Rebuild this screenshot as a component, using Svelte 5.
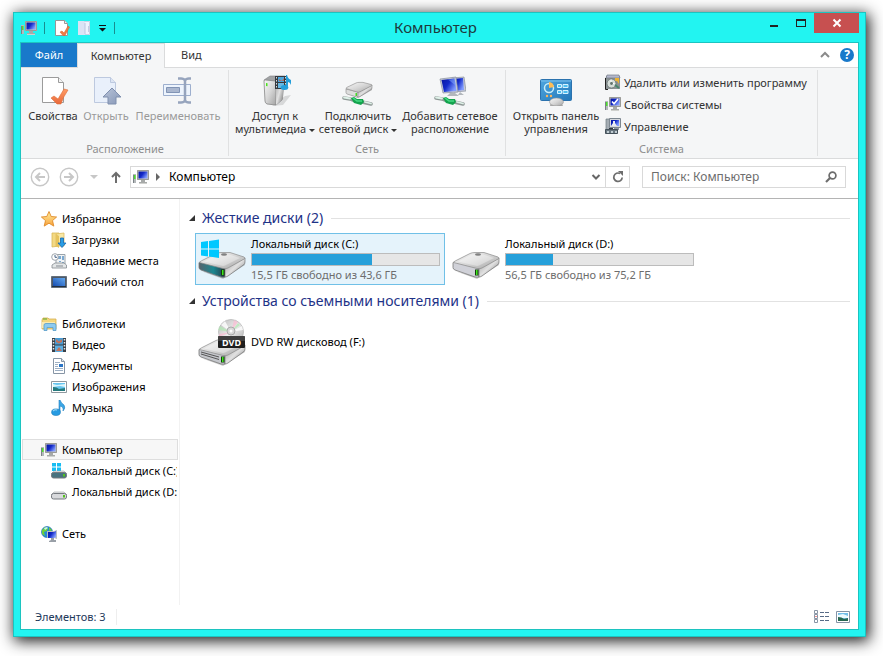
<script>
    let search = $state('');
    let selected = $state('C');
    let openDisks = $state(true);
    let openRemovable = $state(true);

    const tree = [
        [
            { label: 'Избранное', icon: 'star' },
            { label: 'Загрузки', icon: 'downloads', child: true },
            { label: 'Недавние места', icon: 'recent', child: true },
            { label: 'Рабочий стол', icon: 'desktop', child: true }
        ],
        [
            { label: 'Библиотеки', icon: 'libraries' },
            { label: 'Видео', icon: 'video', child: true },
            { label: 'Документы', icon: 'document', child: true },
            { label: 'Изображения', icon: 'pictures', child: true },
            { label: 'Музыка', icon: 'music', child: true }
        ],
        [
            { label: 'Компьютер', icon: 'computer', current: true },
            { label: 'Локальный диск (C:)', icon: 'diskC', child: true },
            { label: 'Локальный диск (D:)', icon: 'disk', child: true }
        ],
        [{ label: 'Сеть', icon: 'network' }]
    ];

    const drives = [
        { id: 'C', label: 'Локальный диск (C:)', free: 15.5, total: 43.6, icon: 'driveC' },
        { id: 'D', label: 'Локальный диск (D:)', free: 56.5, total: 75.2, icon: 'drive' }
    ];

    const gb = (n) => n.toFixed(1).replace('.', ',');
    const used = (d) => Math.round(((d.total - d.free) / d.total) * 100);
</script>

{#snippet pc()}
    <path d="M0 5h3v9H0z" fill="#b5b9bb" />
    <path d="M0 6h1v8H0z" fill="#7b8287" />
    <path d="M1 6h1.500v4H1z" fill="#4de02c" />
    <path d="M4 1h12v10H4z" fill="#c9c8bd" />
    <path d="M4.500 1.500h11v9h-11z" fill="none" stroke="#9a9b98" />
    <path d="M5.500 2.500h9v7h-9z" fill="url(#screen)" />
    <path d="M8 11h4v2h2v1H6v-1h2z" fill="#a7aaa9" />
    <path d="M6 14h8v1H6z" fill="#d0d1ce" />
{/snippet}

{#snippet smallDisk(fill)}
    <path d="M3 8h10l3 3H0z" fill="#e6e7e8" stroke="#a0a3a6" stroke-width=".6" />
    <rect x="0.500" y="9.500" width="15" height="5.500" rx="2" {fill} stroke="#777b80" />
    <path d="M12 11h2v2.500h-2z" fill="#54c21e" />
{/snippet}

{#snippet bigDrive(front)}
    <path d="M3 36l22 8 22-14v-4L26 42z" fill="#000" opacity=".2" />
    <path d="M1 28q0-1 1.500-1L27 33v9q-2 .5-4 0L3 35q-2-.8-2-2.500z" fill={front} stroke="#777" stroke-width=".8" />
    <path d="M27 33l20-10v4q0 1.500-1 2.500L30 41q-1.500 1-3 1z" fill="url(#side)" stroke="#666" stroke-width=".6" />
    <path d="M1.500 27.500q.5-1 2-1.700L18 18.500q2-1 5-1h9l14 4.500q1.500.8.500 1.800L30 33q-2 1-5 .5z" fill="url(#metal)" stroke="#8a8a8a" stroke-width=".7" />
    <path d="M6 26.500L20 19.500h11l11 3.500-15 7.500q-1.500.7-3 .3z" fill="#fff" opacity=".35" />
    <ellipse cx="26" cy="19.500" rx="3" ry="1.200" fill="#555" opacity=".7" />
    <path d="M23 34.500h3.500v6H23z" fill="#153b10" />
    <path d="M24 35h1.500v5H24z" fill="#3ee61c" />
{/snippet}

{#snippet cable()}
    <path d="M2 24l6 1 5 2M20 28l9 2" fill="none" stroke="#8f9997" stroke-width="3.500" stroke-linecap="round" />
    <path d="M2 23.500l6 1M23 28l6 1.500" fill="none" stroke="#dff1e8" stroke-width="1.800" stroke-linecap="round" />
    <path d="M9 24l3-1 3 2 6 0 1 3-3 3-7-2z" fill="#13a34d" />
    <path d="M11 24l4 3h5" fill="none" stroke="#45d983" stroke-width="1.500" />
{/snippet}

{#snippet flag()}
    <path d="M3 7l7-1v7.500H3zM11 6l10-1.500v9H11zM3 14.500h7v7l-7-1zM11 14.500h10v8.500l-10-1.400z" fill="#00c8ff" />
{/snippet}

{#snippet icon(name, size = 16)}
    {#if size === 16}
        <svg class="i16" viewBox="0 0 16 16" aria-hidden="true">
            {#if name === 'computer'}
                {@render pc()}
            {:else if name === 'star'}
                <path d="M8 .5l2.200 5 5.400.500-4.100 3.600 1.300 5.500L8 12.200l-4.800 2.900 1.300-5.500L.4 6l5.400-.5z" fill="url(#gold)" stroke="#e08a28" stroke-width=".9" />
            {:else if name === 'downloads'}
                <path d="M1 1h7v13l-7 1z" fill="#f3d983" stroke="#d9b757" stroke-width=".8" />
                <path d="M5 2l8-1v13H5z" fill="#f8e7a4" stroke="#ddbd60" stroke-width=".8" />
                <path d="M5 2l3 2v12l-3-2z" fill="#e6c35d" />
                <path d="M9.500 6h3v5H15l-4 4.500L7 11h2.500z" fill="#289de5" stroke="#1667b0" stroke-width=".8" />
            {:else if name === 'recent'}
                <path d="M5 1.500h9v10H5z" fill="#f0f3f5" stroke="#9aa3aa" />
                <path d="M7 3h3v3H7zM11 3h2v4h-2zM8 8h2v1H8zM11 9h2v1h-2z" fill="#7ba8cf" />
                <path d="M1 12l3-2h9l2.500 2v3H1z" fill="#e3e6e7" stroke="#858b90" stroke-width=".8" />
                <path d="M5 12.500h7v1H5z" fill="#858b90" />
                <circle cx="4" cy="4" r="3.300" fill="#fff" stroke="#a0a6ac" />
                <path d="M4 2v2.300h2" fill="none" stroke="#4b6585" />
            {:else if name === 'desktop'}
                <path d="M.5 2.500h15v11H.5z" fill="#4e5967" stroke="#65707c" />
                <path d="M2 4h12v8H2z" fill="url(#desk)" />
                <path d="M1 12h14v1H1z" fill="#24303f" />
            {:else if name === 'libraries'}
                <path d="M1 4l1-2h5l1 1h7v10H1z" fill="#f4d77d" stroke="#d7ae50" stroke-width=".8" />
                <path d="M2 3h4" stroke="#58a830" />
                <path d="M1 6h13v6H1z" fill="#faeab2" />
                <path d="M3 14.500V9q0-1.500 2-1.500h8q2 0 2 1.500v5.500h-3v-3H6v3z" fill="#8ccaf0" stroke="#589cc8" stroke-width=".8" />
            {:else if name === 'video'}
                <path d="M1 1h14v14H1z" fill="#3a4048" />
                <path d="M4 1h8v6.500H4z" fill="#479cd5" />
                <path d="M4 8.500h8V15H4z" fill="#5daee1" />
                <path d="M5 2l3 2.500L11 2v3l-3 1.500L5 5zM5 14l3-4 3 4z" fill="#c5735a" />
                <path d="M2.500 2v12M13.500 2v12" stroke="#e3e8ea" stroke-width="1.500" stroke-dasharray="1.500 1.500" />
            {:else if name === 'document'}
                <path d="M2.500.5h8l3 3v12h-11z" fill="#fff" stroke="#8795a5" />
                <path d="M10.500.5v3h3" fill="#dce3ea" stroke="#8795a5" />
                <path d="M4 4.500h5M4 6.500h3M4 8.500h3M4 10.500h8M4 12.500h8" stroke="#9dafc3" />
                <path d="M8 6h4v3H8z" fill="#2b75c6" />
            {:else if name === 'pictures'}
                <path d="M.5 2.500h15v11H.5z" fill="#fff" stroke="#8f999f" />
                <path d="M2 4h12v8H2z" fill="#66c5ef" />
                <path d="M2 5l4 1 8-1v3l-5-1-7 1z" fill="#dcf5fb" />
                <path d="M2 8q4 0 6 2l6-1v3H2z" fill="#257a7d" />
            {:else if name === 'music'}
                <path d="M8 0h1q1 3 4 5 2 3-1 6 1-4-3-5v6H8z" fill="#3ba6e5" stroke="#2282c2" stroke-width=".6" />
                <ellipse cx="5" cy="12.200" rx="4.400" ry="3.300" fill="#279be2" stroke="#1f7dbb" stroke-width=".6" />
                <path d="M2 11q2-2 4-1" fill="none" stroke="#a9dffa" />
            {:else if name === 'diskC'}
                <path d="M1 0h4v3.500H1zM6 0h4v3.500H6zM1 4.500h4V8H1zM6 4.500h4V8H6z" fill="#16bdf3" />
                {@render smallDisk('#48727f')}
            {:else if name === 'disk'}
                {@render smallDisk('#d8d9dc')}
            {:else if name === 'network'}
                <circle cx="6" cy="6" r="5.500" fill="#2688d7" stroke="#1b66a9" stroke-width=".6" />
                <path d="M1 4l3-3 3 1-1 3-3 1 1 4-3-2zM8 1l3 3-2 2-1-2z" fill="#6bcf3d" />
                <path d="M3 2l3-1 1 1-3 2z" fill="#c6f0f5" />
                <path d="M6 5h7l3-1v9l-3-1H6z" fill="#b8bdc3" />
                <path d="M7 6h6l2-1v6l-2 1H7z" fill="url(#screen)" />
                <path d="M10 12h3v2h2v2H8v-1l2-1z" fill="#999fa7" />
            {:else if name === 'check'}
                <path d="M1.500.5h9l3 3v12h-12z" fill="#fff" stroke="#979797" />
                <path d="M10.500.5v3h3" fill="#eee" stroke="#979797" />
                <path d="M6 12l2-1 2 2 4-7 1.500 1-4.500 8.500H9z" fill="#f07a43" stroke="#d8602b" stroke-width=".5" />
            {:else if name === 'folder'}
                <path d="M2 1h12v14H2z" fill="#edf3ff" />
                <path d="M2.500 1.500h11v13h-11z" fill="none" stroke="#c9d0e4" />
                <path d="M2 1h6l1 2v12H2z" fill="#dbe3f5" />
                <path d="M9 3v11" stroke="#bbc6e0" />
                <path d="M12.500 6v6" stroke="#c3cce3" />
            {:else if name === 'programs'}
                <path d="M1 2h14v13H1z" fill="#8b9294" />
                <path d="M2 1h12l1 3H1z" fill="#b3b7cc" stroke="#737b85" stroke-width=".7" />
                <path d="M10 4h4v6l-2-3h-2z" fill="#edb332" />
                <circle cx="6.500" cy="9.500" r="4.500" fill="#d5ddd9" stroke="#687372" stroke-width=".8" />
                <circle cx="6.500" cy="9.500" r="1.400" fill="#60736d" />
                <path d="M6 5.500v2.500M9.500 9.500h-1.500" stroke="#fff" />
                <path d="M10 11l4 3" stroke="#48856c" stroke-width="2" />
                <path d="M.5 4v11.500H3" fill="none" stroke="#222" />
            {:else if name === 'sysprops'}
                {@render pc()}
                <path d="M7 5.500l2 2.300L13 3" fill="none" stroke="#fff" stroke-width="1.600" />
            {:else if name === 'manage'}
                <path d="M1 1h5v11H1z" fill="#a4acb3" stroke="#6e7880" stroke-width=".7" />
                <path d="M4.500.5h11v9h-11z" fill="#d7dade" stroke="#7d8790" />
                <path d="M6 2h8v6H6z" fill="url(#screen)" />
                <path d="M6 8l2-3V3h2v2l2 3z" fill="#e9edf1" />
                <path d="M9 10h5v2H9z" fill="#8d969d" />
                <path d="M.5 11.500h12v4H.5z" fill="#697780" stroke="#45515a" />
                <path d="M2 13h2v2H2zM6 13h2v2H6zM10 13h2v2h-2z" fill="#c0ccd2" />
                <path d="M4 10h4v1H4z" fill="#333b44" />
            {/if}
        </svg>
    {:else if size === 32}
        <svg class="i32" viewBox="0 0 32 32" aria-hidden="true">
            {#if name === 'properties'}
                <path d="M5.500 3.500h16l5 5v20h-21z" fill="#fff" stroke="#9b9b9b" />
                <path d="M21.500 3.500v5h5" fill="#f3f3f3" stroke="#9b9b9b" />
                <path d="M14 24l3-2 4 3 6-10 4 1q-5 7-7 14h-4z" fill="url(#orange)" stroke="#de6e3a" stroke-width=".6" />
            {:else if name === 'open'}
                <path d="M4.500 3.500h16l5 5v20h-21z" fill="#e9f0fb" stroke="#bdc9df" />
                <path d="M20.500 3.500v5h5" fill="#dde5f3" stroke="#bdc9df" />
                <path d="M22 14l9 9h-5v7h-8v-7h-5z" fill="url(#arrow)" stroke="#7f8fae" />
            {:else if name === 'rename'}
                <path d="M1.500 10.500h27v11h-27z" fill="#edf4fd" stroke="#9dafce" />
                <path d="M4.500 13.500h13v5h-13z" fill="#aab7cf" stroke="#8194b5" />
                <path d="M16 4.500h3q3 0 4 2 1-2 4-2h2M16 28.500h3q3 0 4-2 1 2 4 2h2M23 6v21" fill="none" stroke="#96a4bd" stroke-width="2.500" />
            {:else if name === 'media'}
                <path d="M13 32l11-1 8-10-6 1z" fill="#000" opacity=".12" />
                <path d="M5 6l6-4h15l-3 24-6 5z" fill="#a1a3a5" stroke="#808284" stroke-width=".6" />
                <path d="M5 7q0-1 1.500-1L17 7v24l-9-1q-2-1-2-3z" fill="url(#metal)" stroke="#878787" stroke-width=".8" />
                <path d="M17 7l8-5-1 23-7 6z" fill="url(#side)" />
                <path d="M7 9l1.500.2v3L7 12z" fill="#4ce31e" />
                <path d="M16 2h12v13H16z" fill="#353a40" />
                <path d="M19 3h6v5h-6z" fill="#4ba5dc" />
                <path d="M19 9h6v5h-6z" fill="#69b8e2" />
                <path d="M20 5l3 2 2-3v3h-5z" fill="#c06751" />
                <path d="M17.500 3v11M26.500 3v11" stroke="#d9dcdd" stroke-dasharray="1.500 1.500" />
                <path d="M27 1h1q1 4 4 5v5q-1-3-3-3v6h-2z" fill="#249fdb" />
                <ellipse cx="25.500" cy="13.500" rx="3.800" ry="2.500" fill="#249fdb" />
            {:else if name === 'mapdrive'}
                <path d="M5 19l11 5 14-8v-2L16 22z" fill="#555" opacity=".4" />
                <path d="M4 15l12 3v5q-2 0-3-.5L5 20q-1-.5-1-1.500z" fill="#ddd" stroke="#888" stroke-width=".6" />
                <path d="M16 18l14-7v3q0 1-1 1.500L18 22.500q-1 .5-2 .5z" fill="url(#side)" stroke="#777" stroke-width=".5" />
                <path d="M4 14.500q0-.7 1-1.200L14 9q1-.6 3-.6h4l8.500 2.200q1 .5 0 1.200L18 17.800q-1.500.7-3 .2z" fill="url(#metal)" stroke="#888" stroke-width=".6" />
                <path d="M13.500 19H15v3h-1.500z" fill="#47db25" />
                {@render cable()}
            {:else if name === 'addnet'}
                <path d="M18 4l12-1 2 14-12 1z" fill="#c7cbd5" stroke="#888f9d" stroke-width=".7" />
                <path d="M19 5l10-1 1 12-9 1z" fill="url(#screen)" />
                <path d="M6 5l16-2 2 15-15 1z" fill="#c7cbd5" stroke="#888f9d" stroke-width=".7" />
                <path d="M7.500 6l13-1.500 2 12.500-12.500 1z" fill="url(#screen)" />
                <path d="M14 5.500l7-.8 1 7z" fill="#8aafff" opacity=".5" />
                <path d="M16 19h5l4 3H13zM26 18l4 3h-6z" fill="#b2b7bc" />
                {@render cable()}
            {:else if name === 'control'}
                <rect x=".5" y="5.500" width="31" height="21" rx="1" fill="url(#panel)" stroke="#2b72ae" />
                <path d="M1 6h30v2H1z" fill="#75bdeb" opacity=".6" />
                <circle cx="9" cy="14" r="4.500" fill="none" stroke="#c7edfa" stroke-width="1.500" />
                <path d="M9 14V8a6 6 0 0 1 5 5z" fill="#ffbc55" />
                <path d="M17.500 10.500h4v3h-4zM23 10.500h5v3h-5zM17.500 16.500h4v3h-4zM23 16.500h5v3h-5z" fill="#4ebff0" stroke="#d4f2ff" />
                <circle cx="7" cy="22" r="1.200" fill="#ffb65c" />
                <circle cx="11" cy="22" r="1.200" fill="#ffb65c" />
                <path d="M10 32q0-4 6-4t7 4z" fill="#aaa" />
                <ellipse cx="16.500" cy="28" rx="7" ry="4" fill="url(#metal)" stroke="#999" stroke-width=".6" />
            {/if}
        </svg>
    {:else}
        <svg class="i48" viewBox="0 0 48 48" aria-hidden="true">
            {#if name === 'driveC'}
                {@render bigDrive('url(#teal)')}
                {@render flag()}
            {:else if name === 'drive'}
                {@render bigDrive('#d0d1d8')}
            {:else if name === 'dvd'}
                <g transform="translate(0 4)">
                    {@render bigDrive('#c5c7cc')}
                    <path d="M3 30l18 5M3 32l18 5.500" stroke="#555" />
                </g>
                <circle cx="33" cy="14" r="12.500" fill="url(#disc)" stroke="#b2b2b2" stroke-width=".7" />
                <path d="M33 14L23 7l4-4zM33 14l11-6 1 4z" fill="#fff" opacity=".8" />
                <path d="M33 14l3-12 4 2zM33 14l-12 2v3z" fill="#ffb5d0" opacity=".6" />
                <path d="M33 14l7-9 2 2zM33 14L22 8l-2 4z" fill="#afe8b1" opacity=".7" />
                <circle cx="33" cy="13" r="4" fill="#d8d8d8" stroke="#aaa" />
                <circle cx="33" cy="13" r="1.500" fill="#fff" />
                <rect x="20" y="18" width="27" height="12" rx="1" fill="#1e1e1e" />
                <path d="M20 18h27v5H20z" fill="#555" opacity=".6" />
                <text class="dvd-text" x="33.500" y="27.500" text-anchor="middle">DVD</text>
            {/if}
        </svg>
    {/if}
{/snippet}

<svg class="defs" aria-hidden="true">
    <defs>
        <linearGradient id="screen" x1="0" y1="0" x2="1" y2=".6">
            <stop offset="0" stop-color="#0716a0" /><stop offset=".5" stop-color="#1229c8" /><stop offset="1" stop-color="#829dff" />
        </linearGradient>
        <linearGradient id="gold" x1="0" y1="0" x2="0" y2="1">
            <stop offset="0" stop-color="#fff0a0" /><stop offset="1" stop-color="#f8a13b" />
        </linearGradient>
        <linearGradient id="desk" x1="0" y1="1" x2="1" y2="0">
            <stop offset="0" stop-color="#154db1" /><stop offset="1" stop-color="#64a9ef" />
        </linearGradient>
        <linearGradient id="metal" x1="0" y1="0" x2="1" y2="1">
            <stop offset="0" stop-color="#f8f8f8" /><stop offset=".5" stop-color="#d6d6d6" /><stop offset="1" stop-color="#a3a3a3" />
        </linearGradient>
        <linearGradient id="side" x1="0" y1="0" x2="1" y2="1">
            <stop offset="0" stop-color="#9a9a9a" /><stop offset=".5" stop-color="#e1e1e1" /><stop offset="1" stop-color="#656565" />
        </linearGradient>
        <linearGradient id="teal" x1="0" y1="0" x2="1" y2="0">
            <stop offset="0" stop-color="#55636d" /><stop offset=".55" stop-color="#1b8790" /><stop offset="1" stop-color="#283b49" />
        </linearGradient>
        <linearGradient id="orange" x1="0" y1="0" x2="0" y2="1">
            <stop offset="0" stop-color="#ff9c65" /><stop offset="1" stop-color="#e8683a" />
        </linearGradient>
        <linearGradient id="arrow" x1="0" y1="0" x2="1" y2="1">
            <stop offset="0" stop-color="#b9c5da" /><stop offset="1" stop-color="#8797b6" />
        </linearGradient>
        <linearGradient id="panel" x1="0" y1="0" x2="1" y2="1">
            <stop offset="0" stop-color="#4fa6df" /><stop offset="1" stop-color="#2378b9" />
        </linearGradient>
        <linearGradient id="disc" x1="0" y1="0" x2="1" y2="1">
            <stop offset="0" stop-color="#b8b8b8" /><stop offset=".5" stop-color="#ececec" /><stop offset="1" stop-color="#aaa" />
        </linearGradient>
    </defs>
</svg>

<main class="window">
    <header class="titlebar">
        <div class="quick">
            {@render icon('computer')}
            <span class="bar"></span>
            <button aria-label="Свойства">{@render icon('check')}</button>
            <button aria-label="Новая папка">{@render icon('folder')}</button>
            <button class="quick-more" aria-label="Настройка панели">
                <svg width="8" height="8" viewBox="0 0 8 8"><path d="M0 1h7v1H0zM0 4h7L3.500 7.500z" fill="#111" /></svg>
            </button>
            <span class="bar"></span>
        </div>
        <h1>Компьютер</h1>
        <div class="controls">
            <button aria-label="Свернуть"><svg width="10" height="10" viewBox="0 0 10 10"><path d="M1 7h8v2H1z" fill="#222" /></svg></button>
            <button aria-label="Развернуть"><svg width="10" height="10" viewBox="0 0 10 10"><path d="M0 1h10v8H0zM1 3v5h8V3z" fill="#222" fill-rule="evenodd" /></svg></button>
            <button class="close" aria-label="Закрыть"><svg width="10" height="10" viewBox="0 0 10 10"><path d="M1.500 1.500l7 7M8.500 1.500l-7 7" stroke="#fff" stroke-width="2" /></svg></button>
        </div>
    </header>

    <div class="client">
        <nav class="tabs">
            <button class="tab file">Файл</button>
            <button class="tab active">Компьютер</button>
            <button class="tab">Вид</button>
            <div class="tab-tools">
                <button aria-label="Свернуть ленту"><svg width="10" height="8" viewBox="0 0 10 8"><path d="M1 6l4-4 4 4" fill="none" stroke="#8a8a8a" stroke-width="2" /></svg></button>
                <button class="help" aria-label="Справка">?</button>
            </div>
        </nav>

        <section class="ribbon">
            <div class="group">
                <div class="tools">
                    <button class="big w50">{@render icon('properties', 32)}<span>Свойства</span></button>
                    <button class="big w50" disabled>{@render icon('open', 32)}<span>Открыть</span></button>
                    <button class="big w88" disabled>{@render icon('rename', 32)}<span>Переименовать</span></button>
                </div>
                <p>Расположение</p>
            </div>
            <div class="group">
                <div class="tools">
                    <button class="big w80">{@render icon('media', 32)}<span>Доступ к<br />мультимедиа <i class="caret"></i></span></button>
                    <button class="big w80">{@render icon('mapdrive', 32)}<span>Подключить<br />сетевой диск <i class="caret"></i></span></button>
                    <button class="big w98">{@render icon('addnet', 32)}<span>Добавить сетевое<br />расположение</span></button>
                </div>
                <p>Сеть</p>
            </div>
            <div class="group">
                <div class="tools">
                    <button class="big w88">{@render icon('control', 32)}<span>Открыть панель<br />управления</span></button>
                    <div class="stack">
                        <button>{@render icon('programs')}Удалить или изменить программу</button>
                        <button>{@render icon('sysprops')}Свойства системы</button>
                        <button>{@render icon('manage')}Управление</button>
                    </div>
                </div>
                <p>Система</p>
            </div>
        </section>

        <div class="navbar">
            <button aria-label="Назад"><svg width="20" height="20" viewBox="0 0 20 20" fill="none" stroke="#c7c7c7"><circle cx="10" cy="10" r="8.700" stroke-width="1.400" /><path d="M15 10H6M10 6l-4 4 4 4" stroke-width="2" /></svg></button>
            <button aria-label="Вперёд"><svg width="20" height="20" viewBox="0 0 20 20" fill="none" stroke="#c7c7c7"><circle cx="10" cy="10" r="8.700" stroke-width="1.400" /><path d="M5 10h9M10 6l4 4-4 4" stroke-width="2" /></svg></button>
            <button class="history" aria-label="Журнал"><svg width="8" height="4" viewBox="0 0 8 4"><path d="M0 0h8L4 4z" fill="#c7c7c7" /></svg></button>
            <button class="up" aria-label="Вверх"><svg width="10" height="12" viewBox="0 0 10 12" fill="none" stroke="#6d6d6d" stroke-width="2"><path d="M5 12V2M1 6l4-4 4 4" /></svg></button>
            <div class="address">
                {@render icon('computer')}
                <svg class="crumb-arrow" width="4" height="8" viewBox="0 0 4 8"><path d="M0 0l4 4-4 4z" fill="#666" /></svg>
                <button class="crumb">Компьютер</button>
                <button class="drop" aria-label="Предыдущие расположения"><svg width="10" height="8" viewBox="0 0 10 8"><path d="M1.500 2L5 5.500 8.500 2" fill="none" stroke="#666" stroke-width="2" /></svg></button>
                <button class="refresh" aria-label="Обновить"><svg width="12" height="12" viewBox="0 0 12 12"><path d="M8 2.500A4.200 4.200 0 1 0 10.200 6.500" fill="none" stroke="#6d6d6d" stroke-width="1.700" /><path d="M6 0h5v5z" fill="#6d6d6d" /></svg></button>
            </div>
            <label class="search">
                <input type="text" aria-label="Поиск" placeholder="Поиск: Компьютер" bind:value={search} />
                <svg width="12" height="12" viewBox="0 0 12 12" fill="none" stroke="#6d6d6d"><circle cx="7.500" cy="4.500" r="3.400" stroke-width="1.700" /><path d="M5 7l-4 4" stroke-width="2.200" /></svg>
            </label>
        </div>

        <div class="body">
            <nav class="tree">
                {#each tree as section}
                    <ul>
                        {#each section as item}
                            <li>
                                <a href="#top" class:child={item.child} class:current={item.current}>
                                    {@render icon(item.icon)}<span>{item.label}</span>
                                </a>
                            </li>
                        {/each}
                    </ul>
                {/each}
            </nav>

            <section class="content">
                <h2>
                    <button onclick={() => (openDisks = !openDisks)}>
                        <svg width="6" height="6" viewBox="0 0 6 6"><path d="M6 0v6H0z" fill="#333" /></svg>Жесткие диски (2)
                    </button>
                </h2>
                {#if openDisks}
                    <div class="items">
                        {#each drives as d}
                            <button class="item" class:selected={selected === d.id} onclick={() => (selected = d.id)}>
                                {@render icon(d.icon, 48)}
                                <span class="info">
                                    <span>{d.label}</span>
                                    <span class="meter"><span class="fill" style="width: {used(d)}%"></span></span>
                                    <span class="free">{gb(d.free)} ГБ свободно из {gb(d.total)} ГБ</span>
                                </span>
                            </button>
                        {/each}
                    </div>
                {/if}
                <h2>
                    <button onclick={() => (openRemovable = !openRemovable)}>
                        <svg width="6" height="6" viewBox="0 0 6 6"><path d="M6 0v6H0z" fill="#333" /></svg>Устройства со съемными носителями (1)
                    </button>
                </h2>
                {#if openRemovable}
                    <div class="items">
                        <button class="item" class:selected={selected === 'F'} onclick={() => (selected = 'F')}>
                            {@render icon('dvd', 48)}
                            <span class="info">DVD RW дисковод (F:)</span>
                        </button>
                    </div>
                {/if}
            </section>
        </div>

        <footer class="status">
            <span class="count">Элементов: 3</span>
            <div class="views">
                <button aria-label="Таблица">
                    <svg width="16" height="14" viewBox="0 0 16 14">
                        <path d="M1.500.5h3v3h-3zM1.500 4.500h3v4h-3zM1.500 9.500h3v3h-3z" fill="#fff" stroke="#8995a5" />
                        <path d="M7 2.500h4M12 2.500h4M7 6.500h4M12 6.500h4M7 10.500h4M12 10.500h4" stroke="#576b86" />
                        <path d="M2.500 6h1v1h-1z" fill="#d22" />
                    </svg>
                </button>
                <button aria-label="Крупные значки">
                    <svg width="14" height="12" viewBox="0 0 14 12">
                        <path d="M.5.5h13v11H.5z" fill="#fff" stroke="#8493a6" />
                        <path d="M2 2h10v8H2z" fill="#73bfe9" />
                        <path d="M2 4l5-1 5 2v2H2z" fill="#ecfaff" />
                        <path d="M2 6q4 0 6 2l4-1v3H2z" fill="#276750" />
                    </svg>
                </button>
            </div>
        </footer>
    </div>
</main>

<style>
    :global(body) {
        background: #fff;
    }
    :global(#app) {
        display: flow-root;
    }
    .defs {
        display: block;
        width: 0;
        height: 0;
    }
    button {
        padding: 0;
        border: 0;
        background: none;
        color: inherit;
        font: inherit;
        cursor: pointer;
    }
    svg {
        display: block;
        flex: none;
    }
    .i16 { width: 16px; height: 16px; }
    .i32 { width: 32px; height: 32px; }
    .i48 { width: 48px; height: 48px; }

    .window {
        display: flex;
        flex-direction: column;
        box-sizing: border-box;
        min-height: calc(100vh - 31px);
        margin: 12px 17px 19px 13px;
        padding: 0 6px 6px;
        border: 1px solid #1cc4c0;
        background: #22f4f1;
        box-shadow: 2px 3px 14px 1px rgba(0, 0, 0, 0.9);
        color: #000;
        font-family: "Noto Sans", "Open Sans", sans-serif;
        font-size: 11px;
        line-height: 16px;
    }
    .titlebar {
        display: grid;
        grid-template-columns: 1fr auto 1fr;
        height: 29px;
    }
    .quick {
        display: flex;
        align-items: center;
        gap: 6px;
        padding-left: 1px;
    }
    .bar {
        width: 1px;
        height: 12px;
        margin: 0 3px 0 1px;
        background: #178e90;
    }
    .quick-more {
        margin-left: 1px;
    }
    h1 {
        margin: 0;
        padding-right: 8px;
        color: #1d3a3c;
        font-size: 15px;
        font-weight: 400;
        line-height: 28px;
    }
    .controls {
        display: flex;
        justify-content: flex-end;
        align-items: flex-start;
    }
    .controls button {
        display: grid;
        place-items: center;
        width: 27px;
        height: 20px;
    }
    .controls .close {
        width: 45px;
        background: #c75050;
    }
    .client {
        display: flex;
        flex: 1;
        flex-direction: column;
        border: 1px solid #1cc4c0;
        background: #fff;
    }

    .tabs {
        display: flex;
        height: 24px;
        background: #fff;
    }
    .tab {
        padding: 0 16px;
        color: #333;
    }
    .tab.file {
        width: 56px;
        padding: 0;
        background: #1979ca;
        color: #fff;
    }
    .tab.active {
        position: relative;
        z-index: 1;
        width: 88px;
        margin-bottom: -1px;
        padding: 0;
        border: 1px solid #dadbdc;
        border-bottom: 0;
        background: #f5f6f7;
    }
    .tab-tools {
        display: flex;
        align-items: center;
        gap: 10px;
        margin-left: auto;
        padding-right: 4px;
    }
    .help {
        width: 14px;
        height: 14px;
        border-radius: 50%;
        background: #1979ca;
        color: #fff;
        font-size: 12px;
        font-weight: 700;
        line-height: 14px;
    }

    .ribbon {
        display: flex;
        height: 90px;
        padding-left: 1px;
        border: solid #dadbdc;
        border-width: 1px 0;
        background: #f5f6f7;
        color: #333;
        line-height: 13px;
    }
    .group {
        display: flex;
        flex-direction: column;
        justify-content: space-between;
        margin: 2px 0;
        padding: 4px 6px 0;
        border-right: 1px solid #e0e1e2;
    }
    .group p {
        margin: 0;
        color: #8e8e8e;
        line-height: 14px;
        text-align: center;
    }
    .tools {
        display: flex;
        align-items: flex-start;
        gap: 3px;
    }
    .big {
        display: flex;
        flex-direction: column;
        align-items: center;
        gap: 3px;
        white-space: nowrap;
    }
    .big:disabled {
        color: #9a9a9a;
    }
    .w50 { width: 50px; }
    .w80 { width: 80px; }
    .w88 { width: 88px; }
    .w98 { width: 98px; }
    .caret {
        display: inline-block;
        border: 3px solid transparent;
        border-top-color: #333;
        border-bottom: 0;
        vertical-align: middle;
    }
    .stack {
        display: flex;
        flex-direction: column;
        gap: 6px;
        padding: 0 4px 0 2px;
    }
    .stack button {
        display: flex;
        align-items: center;
        gap: 3px;
        white-space: nowrap;
    }

    .navbar {
        display: flex;
        align-items: center;
        height: 36px;
        padding: 0 12px 3px 9px;
        gap: 9px;
        border-bottom: 1px solid #b4b4b4;
        font-size: 12px;
    }
    .history {
        margin-left: 2px;
    }
    .up {
        margin-left: 4px;
    }
    .address,
    .search {
        display: flex;
        align-items: center;
        box-sizing: border-box;
        height: 22px;
        border: 1px solid #d9d9d9;
    }
    .address {
        flex: 1;
        padding-left: 2px;
    }
    .crumb-arrow {
        margin: 0 9px 0 7px;
    }
    .drop {
        margin: 0 4px 0 auto;
    }
    .refresh {
        display: grid;
        place-items: center;
        width: 24px;
        height: 20px;
        border-left: 1px solid #d9d9d9;
    }
    .search {
        flex: 0 1 202px;
        margin-left: 3px;
        padding: 0 8px;
    }
    .search input {
        flex: 1;
        min-width: 0;
        padding: 0;
        border: 0;
        outline: 0;
        font: inherit;
    }
    .search input::placeholder {
        color: #6d6d6d;
        opacity: 1;
    }

    .body {
        display: flex;
        flex: 1;
    }
    .tree {
        flex: none;
        box-sizing: border-box;
        width: 159px;
        padding: 9px 1px 0;
        border-right: 1px solid #f2f2f2;
    }
    ul {
        margin: 0 0 21px;
        padding: 0;
        list-style: none;
    }
    .tree a {
        display: flex;
        align-items: center;
        gap: 5px;
        box-sizing: border-box;
        height: 21px;
        padding-left: 18px;
        border: 1px solid transparent;
        color: #000;
        text-decoration: none;
        white-space: nowrap;
        overflow: hidden;
    }
    .tree a.child {
        padding-left: 28px;
    }
    .tree a.current {
        border-color: #dedede;
        background: #f7f7f7;
    }
    .content {
        flex: 1;
        min-width: 0;
        padding: 9px 8px 0 9px;
    }
    h2 {
        display: flex;
        align-items: center;
        gap: 8px;
        margin: 0 0 5px;
        color: #1e3287;
        font-size: 14px;
        font-weight: 400;
        line-height: 20px;
    }
    h2::after {
        flex: 1;
        height: 1px;
        background: #e2e2e2;
        content: "";
    }
    h2 button {
        display: flex;
        align-items: center;
        gap: 7px;
    }
    .items {
        display: flex;
        flex-wrap: wrap;
        gap: 4px;
        margin: 0 0 6px 6px;
    }
    .item {
        display: flex;
        align-items: center;
        gap: 5px;
        box-sizing: border-box;
        width: 250px;
        height: 52px;
        padding: 0 4px 0 2px;
        border: 1px solid transparent;
        text-align: left;
    }
    .item.selected {
        border-color: #70c0e7;
        background: #e5f3fb;
    }
    .info {
        display: flex;
        flex: 1;
        flex-direction: column;
        gap: 1px;
    }
    .meter {
        display: flex;
        box-sizing: border-box;
        height: 13px;
        border: 1px solid #bcbcbc;
        background: #e6e6e6;
    }
    .fill {
        background: #26a0da;
    }
    .free {
        color: #6d6d6d;
    }
    .dvd-text {
        fill: #fff;
        font-size: 9px;
        font-weight: 700;
    }

    .status {
        display: flex;
        align-items: center;
        justify-content: space-between;
        height: 24px;
        padding: 0 8px 0 14px;
        color: #1e395b;
    }
    .count {
        padding-right: 10px;
        border-right: 1px solid #eee;
    }
    .views {
        display: flex;
        align-items: center;
        gap: 7px;
    }
</style>
